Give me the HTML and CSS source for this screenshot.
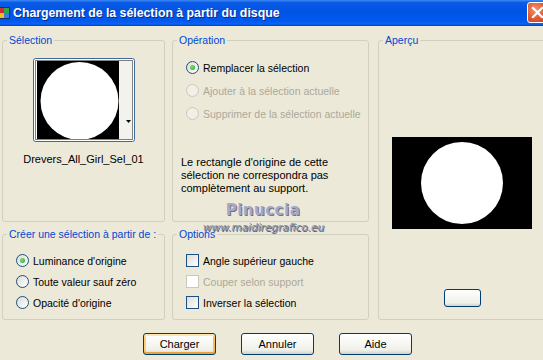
FILE: index.html
```html
<!DOCTYPE html>
<html>
<head>
  <meta charset="UTF-8">
  <title>Chargement de la sélection à partir du disque</title>
  <link rel="stylesheet" href="styles.css">
</head>
<body>
  <div class="titlebar">
    <svg class="app-icon" width="12" height="12" viewBox="0 0 12 12">
      <rect x="0" y="0" width="12" height="12" rx="1" fill="#1a2a6a"/>
      <rect x="1" y="1" width="5" height="5" fill="#d82a2a"/>
      <rect x="6" y="1" width="5" height="5" fill="#2aa84a"/>
      <rect x="1" y="6" width="5" height="5" fill="#f0c020"/>
      <rect x="6" y="6" width="5" height="5" fill="#3a7ae8"/>
    </svg>
    <span class="title">Chargement de la sélection à partir du disque</span>
    <div class="close">
      <svg width="13" height="13" viewBox="0 0 13 13">
        <path d="M2 2 L11 11 M11 2 L2 11" stroke="#fff" stroke-width="2.2" stroke-linecap="square"/>
      </svg>
    </div>
  </div>

  <div class="dialog">
    <fieldset class="group selection">
      <legend>Sélection</legend>
      <svg class="thumb" width="102" height="84" viewBox="0 0 102 84">
        <rect x="0.5" y="0.5" width="101" height="83" rx="2" fill="#fff" stroke="#3d6a9b"/>
        <rect x="4" y="3" width="82" height="78" fill="#000"/>
        <circle cx="46.5" cy="43" r="39" fill="#fff"/>
        <rect x="86" y="3" width="13" height="78" fill="#f3f2ec"/>
        <path d="M93 62 L98 62 L95.5 65 Z" fill="#000"/>
        <rect x="2.5" y="2.5" width="97" height="79" fill="none" stroke="#000" stroke-dasharray="1 1"/>
      </svg>
      <div class="thumb-name">Drevers_All_Girl_Sel_01</div>
    </fieldset>

    <fieldset class="group operation">
      <legend>Opération</legend>
      <div class="choices">
        <div class="choice"><span class="radio checked"></span>Remplacer la sélection</div>
        <div class="choice disabled"><span class="radio"></span>Ajouter à la sélection actuelle</div>
        <div class="choice disabled"><span class="radio"></span>Supprimer de la sélection actuelle</div>
      </div>
      <p class="note">Le rectangle d'origine de cette<br>sélection ne correspondra pas<br>complètement au support.</p>
    </fieldset>

    <fieldset class="group preview">
      <legend>Aperçu</legend>
      <div class="preview-img"><div class="preview-dot"></div></div>
      <div class="small-btn"></div>
    </fieldset>

    <fieldset class="group source">
      <legend>Créer une sélection à partir de :</legend>
      <div class="choices tight">
        <div class="choice"><span class="radio checked"></span>Luminance d'origine</div>
        <div class="choice"><span class="radio"></span>Toute valeur sauf zéro</div>
        <div class="choice"><span class="radio"></span>Opacité d'origine</div>
      </div>
    </fieldset>

    <fieldset class="group options">
      <legend>Options</legend>
      <div class="choices tight">
        <div class="choice"><span class="check"></span>Angle supérieur gauche</div>
        <div class="choice disabled"><span class="check"></span>Couper selon support</div>
        <div class="choice"><span class="check"></span>Inverser la sélection</div>
      </div>
    </fieldset>
  </div>

  <div class="buttons">
    <button class="btn default">Charger</button>
    <button class="btn">Annuler</button>
    <button class="btn">Aide</button>
  </div>

  <div class="watermark">
    <div class="wm-name">Pinuccia</div>
    <div class="wm-site">www.maidiregrafico.eu</div>
  </div>
</body>
</html>
```

FILE: styles.css
```css
body {
  margin: 0;
  width: 543px;
  height: 360px;
  overflow: hidden;
  position: relative;
  background-color: #ECE9D8;
  font-family: "Liberation Sans", Arial, sans-serif;
  font-size: 10.5px;
  color: #000;
}

/* barre de titre */
.titlebar {
  height: 26px;
  display: flex;
  align-items: center;
  position: relative;
  background: linear-gradient(to bottom, #3d8bf5 0%, #0a5ae6 10%, #0054e3 45%, #0058ee 80%, #0a64f5 92%, #0041c8 100%);
}
.app-icon {
  margin-left: -2px;
  margin-right: 3px;
}
.title {
  color: #fff;
  font-weight: bold;
  font-size: 12.3px;
  white-space: nowrap;
  text-shadow: 1px 1px 0 #0a2a8a;
}
.close {
  position: absolute;
  left: 527px;
  top: 2px;
  width: 21px;
  height: 21px;
  box-sizing: border-box;
  border: 1px solid #fff;
  border-radius: 3px;
  background: radial-gradient(circle at 40% 35%, #f39570, #e05a30 55%, #c2401e);
  display: flex;
  align-items: center;
  justify-content: center;
}

/* zone principale */
.dialog {
  display: grid;
  grid-template-columns: 163px 197px 170px;
  grid-template-rows: 189px 93px;
  column-gap: 7px;
  row-gap: 5px;
  padding-left: 2px;
  margin-top: 7px;
}

.group {
  margin: 0;
  padding: 0;
  min-width: 0;
  border: 1px solid #D0D0BF;
  border-radius: 3px;
}
.group legend {
  color: #0046D5;
  padding: 0 2px;
  margin-left: 4px;
  line-height: 14px;
  height: 14px;
  white-space: nowrap;
}

.selection {
  display: flex;
  flex-direction: column;
  align-items: center;
}
.thumb {
  display: block;
  margin-top: 11px;
}
.thumb-name {
  margin-top: 11px;
  line-height: 13px;
  font-size: 11px;
}

.preview {
  grid-column: 3;
  grid-row: 1 / 3;
  margin-left: 2px;
  display: flex;
  flex-direction: column;
  align-items: center;
}
.preview-img {
  margin-top: 90px;
  width: 140px;
  height: 92px;
  background: #000;
  display: flex;
  align-items: center;
  justify-content: center;
}
.preview-dot {
  width: 82px;
  height: 82px;
  border-radius: 50%;
  background: #fff;
}
.small-btn {
  margin-top: 60px;
  width: 37px;
  height: 18px;
  box-sizing: border-box;
  border: 1px solid #003C74;
  border-radius: 3px;
  background: linear-gradient(to bottom, #fff, #f0f0ea 80%, #d6d0c5);
}

.choices {
  padding-top: 9px;
  padding-left: 13px;
}
.choice {
  height: 23px;
  display: flex;
  align-items: center;
  gap: 4px;
  white-space: nowrap;
}
.tight .choice {
  height: 21px;
}
.choice.disabled {
  color: #ACA899;
}

.radio {
  flex: none;
  width: 13px;
  height: 13px;
  box-sizing: border-box;
  border: 1px solid #1C5180;
  border-radius: 50%;
  background: linear-gradient(135deg, #dcdcd7, #fff);
  display: flex;
  align-items: center;
  justify-content: center;
}
.radio.checked::after {
  content: "";
  width: 5px;
  height: 5px;
  border-radius: 50%;
  background: radial-gradient(circle at 40% 40%, #7be07b, #21a121);
}
.disabled .radio {
  border-color: #CAC8BB;
  background: #f2f0e6;
}

.check {
  flex: none;
  width: 13px;
  height: 13px;
  box-sizing: border-box;
  border: 1px solid #1C5180;
  background: linear-gradient(135deg, #dcdcd7, #fff);
}
.disabled .check {
  border-color: #CAC8BB;
  background: #fff;
}

.note {
  margin: 31px 0 0 8px;
  line-height: 13px;
  font-size: 11px;
}

/* boutons */
.buttons {
  display: flex;
  gap: 25px;
  padding-left: 143px;
  margin-top: 13px;
}
.btn {
  width: 73px;
  height: 22px;
  padding: 0;
  border: 1px solid #003C74;
  border-radius: 3px;
  background: linear-gradient(to bottom, #fff, #f0f0ea 80%, #d6d0c5);
  font-family: "Liberation Sans", Arial, sans-serif;
  font-size: 11px;
  color: #000;
}
.btn.default {
  box-shadow: inset 0 2px 0 #ffe7a8, inset 0 -2px 0 #e8a43a, inset 2px 0 0 #fcd07a, inset -2px 0 0 #f5bd58;
}

/* filigrane */
.watermark {
  position: absolute;
  left: 203px;
  top: 200px;
  width: 120px;
  text-align: center;
  pointer-events: none;
}
.wm-name {
  font-family: "DejaVu Sans", sans-serif;
  font-weight: bold;
  font-size: 15px;
  letter-spacing: 0.5px;
  line-height: 20px;
  color: #a6a8c4;
  text-shadow: 1px 1px 0 #6f728f;
}
.wm-site {
  font-family: "DejaVu Sans", sans-serif;
  font-style: italic;
  font-size: 10.5px;
  line-height: 14px;
  color: #8a8ea6;
  text-shadow: 1px 1px 0 #5f637a;
}
```
